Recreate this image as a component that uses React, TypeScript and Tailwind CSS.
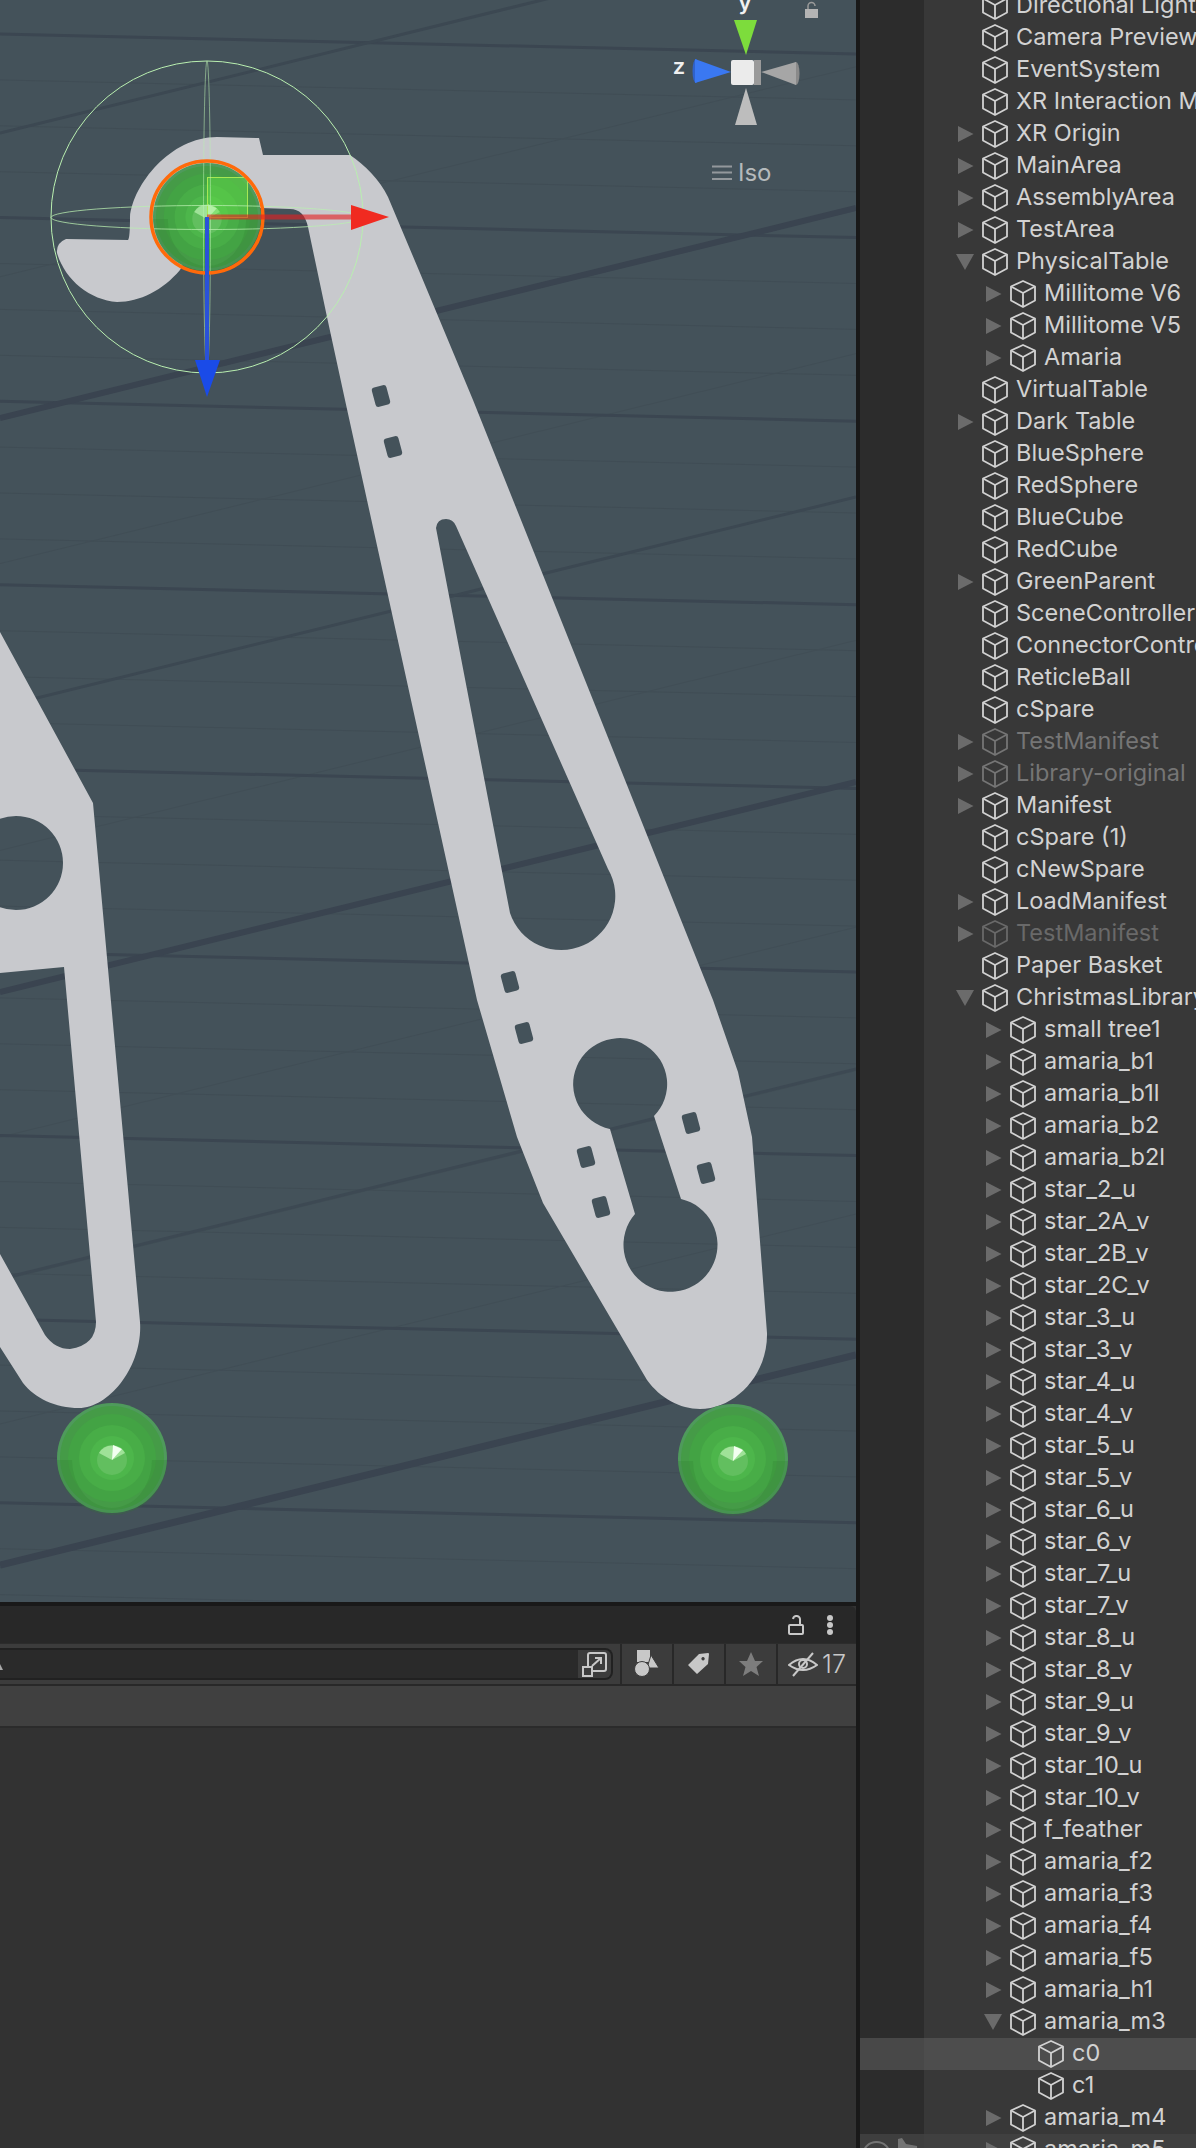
import React from 'react';

type Row = { name: string; depth?: number; arrow?: 'right' | 'down'; tone?: 'dim' | 'dimmer'; state?: 'selected' | 'hover' };

const d1 = (name: string, arrow: Row['arrow'] = 'right'): Row => ({ name, depth: 1, arrow });

const rows: Row[] = [
    { name: 'Directional Light' },
    { name: 'Camera Preview' },
    { name: 'EventSystem' },
    { name: 'XR Interaction Manager' },
    { name: 'XR Origin', arrow: 'right' },
    { name: 'MainArea', arrow: 'right' },
    { name: 'AssemblyArea', arrow: 'right' },
    { name: 'TestArea', arrow: 'right' },
    { name: 'PhysicalTable', arrow: 'down' },
    d1('Millitome V6'),
    d1('Millitome V5'),
    d1('Amaria'),
    { name: 'VirtualTable' },
    { name: 'Dark Table', arrow: 'right' },
    { name: 'BlueSphere' },
    { name: 'RedSphere' },
    { name: 'BlueCube' },
    { name: 'RedCube' },
    { name: 'GreenParent', arrow: 'right' },
    { name: 'SceneController' },
    { name: 'ConnectorController' },
    { name: 'ReticleBall' },
    { name: 'cSpare' },
    { name: 'TestManifest', arrow: 'right', tone: 'dim' },
    { name: 'Library-original', arrow: 'right', tone: 'dim' },
    { name: 'Manifest', arrow: 'right' },
    { name: 'cSpare (1)' },
    { name: 'cNewSpare' },
    { name: 'LoadManifest', arrow: 'right' },
    { name: 'TestManifest', arrow: 'right', tone: 'dimmer' },
    { name: 'Paper Basket' },
    { name: 'ChristmasLibrary', arrow: 'down' },
    ...['small tree1', 'amaria_b1', 'amaria_b1l', 'amaria_b2', 'amaria_b2l', 'star_2_u', 'star_2A_v', 'star_2B_v', 'star_2C_v', 'star_3_u', 'star_3_v', 'star_4_u', 'star_4_v', 'star_5_u', 'star_5_v', 'star_6_u', 'star_6_v', 'star_7_u', 'star_7_v', 'star_8_u', 'star_8_v', 'star_9_u', 'star_9_v', 'star_10_u', 'star_10_v', 'f_feather', 'amaria_f2', 'amaria_f3', 'amaria_f4', 'amaria_f5', 'amaria_h1'].map((n) => d1(n)),
    d1('amaria_m3', 'down'),
    { name: 'c0', depth: 2, state: 'selected' },
    { name: 'c1', depth: 2 },
    d1('amaria_m4'),
    { name: 'amaria_m5', depth: 1, arrow: 'right', state: 'hover' },
];

const slots: [number, number][] = [
    [381, 396], [393, 447], [510, 982], [524, 1033], [691, 1123], [706, 1173], [586, 1157], [601, 1207],
];

const GROUND = '#44525a';
const METAL = '#c8c9cd';

function Sphere({ cx, cy, r = 55 }: { cx: number; cy: number; r?: number }) {
    const k = r / 55;
    return (
        <g>
            <circle cx={cx} cy={cy} r={55 * k} fill="#4f9a5c" />
            <circle cx={cx} cy={cy} r={52 * k} fill="#459b47" />
            <circle cx={cx} cy={cy} r={44 * k} fill="#43a344" />
            <circle cx={cx} cy={cy} r={33 * k} fill="#48ad47" />
            <circle cx={cx} cy={cy} r={22 * k} fill="#4db64b" />
            <path d={`M${cx - 55 * k} ${cy + 2} A${55 * k} ${55 * k} 0 0 0 ${cx + 55 * k} ${cy + 2} L${cx + 40 * k} ${cy + 2} A${40 * k} ${48 * k} 0 0 1 ${cx - 40 * k} ${cy + 2} Z`} fill="#2f7a2f" opacity="0.22" />
            <circle cx={cx} cy={cy + 2} r={15 * k} fill="#62bf5f" />
            <path d={`M${cx} ${cy + 2} L${cx - 13 * k} ${cy - 5 * k} A${15 * k} ${15 * k} 0 0 1 ${cx + 13 * k} ${cy - 5 * k} Z`} fill="#9fe298" />
            <path d={`M${cx} ${cy + 2} L${cx + 1} ${cy - 13 * k} L${cx + 10 * k} ${cy - 9 * k} Z`} fill="#f2fff0" />
        </g>
    );
}

function SceneDrawing() {
    const majors = Array.from({ length: 9 }, (_, k) => 34 + 183.6 * k);
    const minors = Array.from({ length: 36 }, (_, k) => 34 + 45.9 * k).filter((_, k) => k % 4 !== 0);
    const faint = Array.from({ length: 12 }, (_, k) => -10 + 143.4 * k);

    return (
        <svg viewBox="0 0 856 1602" className="block w-full h-full">
            <rect width="856" height="1602" fill={GROUND} />
            {minors.map((y) => (
                <line key={y} x1="0" y1={y} x2="856" y2={y + 20} stroke="#404d55" strokeWidth="1" />
            ))}
            {faint.map((y) => (
                <line key={y} x1="0" y1={y} x2="856" y2={y - 210} stroke="#414e56" strokeWidth="1" />
            ))}
            {majors.map((y) => (
                <line key={y} x1="0" y1={y} x2="856" y2={y + 20} stroke="#3b4651" strokeWidth="3" />
            ))}
            <line x1="0" y1="133" x2="856" y2="-77" stroke="#3c4852" strokeWidth="3" />
            <line x1="0" y1="707" x2="856" y2="497" stroke="#3c4852" strokeWidth="3" />
            <line x1="0" y1="1279" x2="856" y2="1069" stroke="#3d4953" strokeWidth="3" />
            <line x1="0" y1="418" x2="856" y2="208" stroke="#3a4450" strokeWidth="6" />
            <line x1="0" y1="992" x2="856" y2="782" stroke="#3a4450" strokeWidth="6" />
            <line x1="0" y1="1565" x2="856" y2="1355" stroke="#3a4450" strokeWidth="7" />

            {/* main arm */}
            <path
                fillRule="evenodd"
                fill={METAL}
                d="M57 253 Q56 243 66 239 L128 240 Q130 238 130 217 C133 185 170 137 217 137 L259 138 L263 155 L350 155 C365 165 380 180 388 197 L420 273 L473 400 L713 1000 L738 1072 L752 1137 L767 1333 C768 1375 735 1409 700 1409 C680 1409 660 1398 647 1380 L543 1203 L517 1137 L477 1000 L345 400 L327 317 L308 227 Q304 209 290 209 L260 208 L207 220 L180 270 C163 290 140 302 117 302 C90 300 65 280 57 253 Z
                M436 528 Q437 519 446 519 Q453 519 456 526 L608 869 A54 54 0 1 1 510 913 Z
                M610 1129 A47 46 0 1 1 654 1116 L681 1199 A47 47 0 1 1 635 1214 Z"
            />
            {slots.map(([x, y]) => (
                <rect key={x} x={x - 7.5} y={y - 10} width="15" height="20" rx="3" fill="#44525a" transform={`rotate(-15 ${x} ${y})`} />
            ))}

            {/* arm cut off at the left edge */}
            <path
                fillRule="evenodd"
                fill={METAL}
                d="M0 632 L93 803 L140 1322 C143 1365 110 1408 79 1408 C55 1408 35 1398 23 1383 L0 1347 L0 1254 L45 1335 Q55 1349 70 1349 Q96 1345 96 1322 L64 967 L0 973 Z
                M63 863 A47 47 0 1 0 -31 863 A47 47 0 1 0 63 863 Z"
            />

            <Sphere cx={112} cy={1458} />
            <Sphere cx={733} cy={1459} />

            {/* move tool gizmo */}
            <Sphere cx={207} cy={217} r={54} />
            <rect x="207.5" y="177.5" width="40" height="40" fill="#66e04a" fillOpacity="0.45" stroke="#a6e854" strokeWidth="1" />
            <circle cx="207" cy="217" r="156" fill="none" stroke="#b9efb0" strokeWidth="1" />
            <ellipse cx="207" cy="217.5" rx="156" ry="12" fill="none" stroke="#b9efb0" strokeWidth="1" strokeOpacity="0.75" />
            <ellipse cx="207" cy="217" rx="3.5" ry="156" fill="none" stroke="#b9efb0" strokeWidth="1" strokeOpacity="0.55" />
            <circle cx="207" cy="217" r="56" fill="none" stroke="#ff6a0a" strokeWidth="3.5" />
            <line x1="207" y1="217" x2="352" y2="217" stroke="#e61e1e" strokeOpacity="0.6" strokeWidth="5" />
            <polygon points="351,205 389,217 351,230" fill="#f02a20" />
            <line x1="207" y1="217" x2="207" y2="362" stroke="#2a52d8" strokeWidth="4" />
            <polygon points="195,360 220,360 207,397" fill="#1a4be8" />

            {/* orientation widget */}
            <polygon points="734,20 757,20 746,55" fill="#7ddc3c" />
            <ellipse cx="696" cy="71" rx="3.5" ry="12" fill="#2f62cc" />
            <polygon points="695,59 731,72 695,83" fill="#3a78f2" />
            <ellipse cx="796" cy="73.5" rx="3.5" ry="11.5" fill="#8a8a8a" />
            <polygon points="796,62 761,72 796,85" fill="#a6a6a6" />
            <polygon points="735,125 757,125 746,88" fill="#bdbdbd" />
            <rect x="731" y="60" width="23" height="25" rx="2" fill="#ebebeb" />
            <rect x="754" y="60" width="7" height="25" fill="#9a9a9a" />
            <text x="745" y="10" textAnchor="middle" fontSize="22" fontWeight="600" fill="#f0f0f0" fontFamily="Inter, sans-serif">y</text>
            <text x="679" y="74" textAnchor="middle" fontSize="22" fontWeight="600" fill="#f0f0f0" fontFamily="Inter, sans-serif">z</text>
            <rect x="805" y="9" width="13" height="9" fill="#b4b4b4" />
            <path d="M808 9 V6 A3.5 3.5 0 0 1 815 6" fill="none" stroke="#9a9a9a" strokeWidth="1.5" />
            <path d="M712 166.5 H732 M712 172.5 H732 M712 179 H732" stroke="#93989c" strokeWidth="2" />
            <text x="738" y="181" fontSize="24" fill="#b5babc" fontFamily="Inter, sans-serif">Iso</text>
        </svg>
    );
}

function CubeIcon({ className }: { className: string }) {
    return (
        <svg viewBox="0 0 26 28" className={className} fill="none" stroke="currentColor" strokeWidth="1.8" strokeLinejoin="round">
            <path d="M13 1 L25 6.5 V20.5 L13 27 L1 20.5 V6.5 Z" />
            <path d="M1 6.5 L13 13 L25 6.5 M13 13 V27" />
        </svg>
    );
}

function TreeRow({ row }: { row: Row }) {
    const depth = row.depth ?? 0;
    const indent = depth === 0 ? 'pl-[30px]' : depth === 1 ? 'pl-[58px]' : 'pl-[86px]';
    const toneClass = row.tone === 'dim' ? 'text-[#757575]' : row.tone === 'dimmer' ? 'text-[#696969]' : 'text-[#d2d2d2]';
    const gutter = row.state === 'selected' ? 'bg-[#484848]' : row.state === 'hover' ? 'bg-[#3e3e3e]' : 'bg-[#2c2c2c]';
    const body = row.state === 'selected' ? 'bg-[#4d4d4d]' : row.state === 'hover' ? 'bg-[#404040]' : 'bg-[#383838]';

    return (
        <div className="flex h-8 shrink-0">
            <div className={`w-16 shrink-0 relative overflow-hidden ${gutter}`}>
                {row.state === 'hover' && (
                    <svg viewBox="0 0 64 32" className="w-16 h-8 text-[#747474]" fill="currentColor">
                        <ellipse cx="16.5" cy="20" rx="13" ry="12" fill="none" stroke="currentColor" strokeWidth="2" />
                        <path d="M38 5 L42 4 L46 10 L57 12 L58 27 H46 L38 15 Z" />
                    </svg>
                )}
            </div>
            <div className={`flex-1 min-w-0 flex items-center overflow-hidden ${indent} ${body}`}>
                <div className="w-7 shrink-0 pl-0.5">
                    {row.arrow === 'right' && (
                        <svg viewBox="0 0 16 16" className="w-4 h-4 ml-0.5 text-[#6b6b6b]" fill="currentColor">
                            <polygon points="0,0 15.5,8 0,16" />
                        </svg>
                    )}
                    {row.arrow === 'down' && (
                        <svg viewBox="0 0 18 16" className="w-[18px] h-4 text-[#6b6b6b]" fill="currentColor">
                            <polygon points="0,0 18,0 9,16" />
                        </svg>
                    )}
                </div>
                <CubeIcon className={`w-[26px] h-7 shrink-0 ${toneClass}`} />
                <span className={`ml-2 -mt-0.5 text-[23.5px] leading-8 whitespace-nowrap ${toneClass}`}>{row.name}</span>
            </div>
        </div>
    );
}

function ToolbarButton({ children, wide }: { children: React.ReactNode; wide?: boolean }) {
    return (
        <div className={`flex items-center justify-center h-full border-l-2 border-[#282828] ${wide ? 'w-[80px]' : 'w-[52px]'}`}>
            {children}
        </div>
    );
}

function ProjectPanel() {
    return (
        <div className="flex-1 flex flex-col min-h-0 bg-[#323232]">
            <div className="h-[37px] shrink-0 bg-[#282828] rounded-tr-[6px] flex items-center justify-end pr-[23px] gap-[23px] text-[#c8c8c8]">
                <svg viewBox="0 0 16 20" className="w-4 h-5" fill="none" stroke="currentColor" strokeWidth="2">
                    <rect x="1" y="10" width="14" height="9" rx="1" />
                    <path d="M12 10 V5 A3.5 3.5 0 0 0 5 4" />
                </svg>
                <svg viewBox="0 0 6 20" className="w-1.5 h-5" fill="currentColor">
                    <circle cx="3" cy="3" r="3" />
                    <circle cx="3" cy="10" r="3" />
                    <circle cx="3" cy="17" r="3" />
                </svg>
            </div>
            <div className="h-[43px] shrink-0 bg-[#3c3c3c] border-t border-b-2 border-t-[#2c2c2c] border-b-[#282828] flex items-center">
                <div className="flex-1 flex items-center h-[32px] bg-[#2a2a2a] border-2 border-l-0 border-[#212121] rounded-r-[8px] overflow-hidden mr-[7px]">
                    <svg viewBox="0 0 6 8" className="w-1.5 h-2 text-[#a8a8a8] mt-2" fill="currentColor">
                        <polygon points="0,0 3,6 0,6" />
                    </svg>
                    <div className="flex-1" />
                    <div className="w-[33px] h-full bg-[#3c3c3c] flex items-center justify-center text-[#c8c8c8]">
                        <svg viewBox="0 0 26 26" className="w-[26px] h-[26px]" fill="none" stroke="currentColor" strokeWidth="2">
                            <path d="M6 16 V4 A2 2 0 0 1 8 2 H22 A2 2 0 0 1 24 4 V18 A2 2 0 0 1 22 20 H11" />
                            <rect x="1" y="16" width="9" height="9" />
                            <path d="M10 15 L19 7 M13 7 H19 V13" />
                        </svg>
                    </div>
                </div>
                <ToolbarButton>
                    <svg viewBox="0 0 26 28" className="w-[26px] h-7" fill="#c8c8c8">
                        <rect x="3" y="0" width="13" height="12" />
                        <polygon points="17,5 25,18 13,18" stroke="#3c3c3c" strokeWidth="1" />
                        <circle cx="8" cy="19" r="7.5" stroke="#3c3c3c" strokeWidth="1" />
                    </svg>
                </ToolbarButton>
                <ToolbarButton>
                    <svg viewBox="0 0 22 22" className="w-[22px] h-[22px]" fill="#c8c8c8">
                        <path fillRule="evenodd" d="M0 12 L11 1 L20 0 Q21 0 21 1 L20 11 L9 21 Z M15 4 A1.7 1.7 0 1 0 15.1 4 Z" />
                    </svg>
                </ToolbarButton>
                <ToolbarButton>
                    <svg viewBox="0 0 26 26" className="w-[26px] h-[26px]" fill="#7d7d7d">
                        <polygon points="13,1 17,10 25,10 18.5,16 21,25 13,20 5,25 7.5,16 1,10 9,10" />
                    </svg>
                </ToolbarButton>
                <ToolbarButton wide>
                    <div className="flex items-center gap-1 text-[#c8c8c8]">
                        <svg viewBox="0 0 30 26" className="w-[30px] h-[26px]" fill="none" stroke="currentColor" strokeWidth="2">
                            <path d="M1 14 Q15 2 29 14 Q15 24 1 14 Z" />
                            <circle cx="15" cy="13" r="4" />
                            <path d="M5 25 L25 2" />
                        </svg>
                        <span className="text-[25px] leading-none font-light">17</span>
                    </div>
                </ToolbarButton>
            </div>
            <div className="h-[42px] shrink-0 bg-[#404040] border-b-2 border-[#2b2b2b]" />
        </div>
    );
}

export default function App() {
    return (
        <div className="w-[1196px] h-[2148px] flex overflow-hidden bg-[#191919] font-['Inter',sans-serif]">
            <div className="w-[856px] shrink-0 flex flex-col">
                <div className="h-[1602px] shrink-0">
                    <SceneDrawing />
                </div>
                <div className="h-1 shrink-0 bg-[#191919]" />
                <ProjectPanel />
            </div>
            <div className="w-1 shrink-0 bg-[#191919]" />
            <div className="flex-1 min-w-0 flex flex-col -mt-[10px] overflow-hidden">
                {rows.map((row, i) => (
                    <TreeRow key={i} row={row} />
                ))}
            </div>
        </div>
    );
}
